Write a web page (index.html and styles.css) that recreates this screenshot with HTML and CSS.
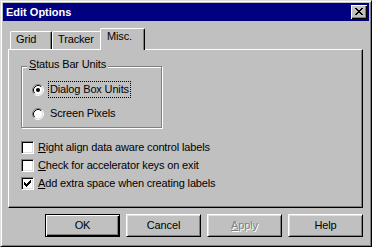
FILE: index.html
```html
<!DOCTYPE html>
<html>
<head>
<meta charset="utf-8">
<link rel="stylesheet" href="styles.css">
</head>
<body>
<div class="window">
  <div class="titlebar">
    <span class="title">Edit Options</span>
    <span class="close">
      <svg width="8" height="7" viewBox="0 0 8 7"><path fill="#000" d="M0 0h2v1H0zM6 0h2v1H6zM1 1h2v1H1zM5 1h2v1H5zM2 2h4v1H2zM3 3h2v1H3zM2 4h4v1H2zM1 5h2v1H1zM5 5h2v1H5zM0 6h2v1H0zM6 6h2v1H6z"/></svg>
    </span>
  </div>
  <div class="tabs">
    <div class="tab tab-grid">Grid</div>
    <div class="tab tab-tracker">Tracker</div>
    <div class="tab tab-misc active">Misc.</div>
  </div>
  <div class="panel">
    <div class="group">
      <span class="legend"><u>S</u>tatus Bar Units</span>
      <div class="radio-row">
        <svg class="radio" width="12" height="12" viewBox="0 0 12 12">
          <circle cx="6" cy="6" r="5" fill="#fff"/>
          <path d="M2.11 9.89A5.5 5.5 0 0 1 9.89 2.11" fill="none" stroke="#808080"/>
          <path d="M9.89 2.11A5.5 5.5 0 0 1 2.11 9.89" fill="none" stroke="#fff"/>
          <path d="M2.82 9.18A4.5 4.5 0 0 1 9.18 2.82" fill="none" stroke="#000"/>
          <path d="M9.18 2.82A4.5 4.5 0 0 1 2.82 9.18" fill="none" stroke="#dfdfdf"/>
          <circle cx="6" cy="6" r="2" fill="#000"/>
        </svg>
        <span class="label focus">Dialog Box Units</span>
      </div>
      <div class="radio-row">
        <svg class="radio" width="12" height="12" viewBox="0 0 12 12">
          <circle cx="6" cy="6" r="5" fill="#fff"/>
          <path d="M2.11 9.89A5.5 5.5 0 0 1 9.89 2.11" fill="none" stroke="#808080"/>
          <path d="M9.89 2.11A5.5 5.5 0 0 1 2.11 9.89" fill="none" stroke="#fff"/>
          <path d="M2.82 9.18A4.5 4.5 0 0 1 9.18 2.82" fill="none" stroke="#000"/>
          <path d="M9.18 2.82A4.5 4.5 0 0 1 2.82 9.18" fill="none" stroke="#dfdfdf"/>
        </svg>
        <span class="label">Screen Pixels</span>
      </div>
    </div>
    <div class="checks">
      <div class="check-row"><span class="box"></span><span class="text"><u>R</u>ight align data aware control labels</span></div>
      <div class="check-row"><span class="box"></span><span class="text"><u>C</u>heck for accelerator keys on exit</span></div>
      <div class="check-row"><span class="box"><svg width="7" height="7" viewBox="0 0 7 7"><path fill="#000" d="M0 2h1v3H0zM1 3h1v3H1zM2 4h1v3H2zM3 3h1v3H3zM4 2h1v3H4zM5 1h1v3H5zM6 0h1v3H6z"/></svg></span><span class="text"><u>A</u>dd extra space when creating labels</span></div>
    </div>
  </div>
  <div class="buttons">
    <div class="btn default">OK</div>
    <div class="btn">Cancel</div>
    <div class="btn disabled"><u>A</u>pply</div>
    <div class="btn">Help</div>
  </div>
</div>
</body>
</html>
```
FILE: styles.css
```css
* { box-sizing: border-box; }
html, body { margin: 0; padding: 0; }
body {
  width: 372px;
  height: 247px;
  background: #c0c0c0;
  font-family: "Liberation Sans", Arial, sans-serif;
  font-size: 11px;
  letter-spacing: -0.15px;
  color: #000;
  overflow: hidden;
}
u { text-decoration: underline; text-underline-offset: 1px; }

.window {
  width: 372px;
  height: 247px;
  background: #c0c0c0;
  border: 1px solid;
  border-color: #dfdfdf #000 #000 #dfdfdf;
  box-shadow: inset 1px 1px #fff, inset -1px -1px #808080;
  padding: 2px;
  display: flex;
  flex-direction: column;
}

.titlebar {
  height: 18px;
  background: #000080;
  display: flex;
  align-items: center;
  justify-content: space-between;
  padding: 0 2px 0 3px;
}
.title {
  color: #fff;
  font-weight: bold;
  font-size: 11px;
  letter-spacing: 0;
  line-height: 13px;
}
.close {
  width: 16px;
  height: 14px;
  background: #c0c0c0;
  box-shadow: inset 1px 1px #fff, inset -1px -1px #000, inset -2px -2px #808080;
  display: flex;
  align-items: center;
  justify-content: center;
  padding: 0 1px 1px 0;
}
.close svg { display: block; }

.tabs {
  display: flex;
  align-items: flex-end;
  height: 21px;
  margin-top: 7px;
  padding-left: 7px;
  position: relative;
  z-index: 1;
}
.tab {
  height: 18px;
  background: #c0c0c0;
  border-top: 1px solid #fff;
  border-left: 1px solid #fff;
  border-right: 1px solid #000;
  border-radius: 2px 2px 0 0;
  box-shadow: inset -1px 0 #808080;
  padding: 1px 0 0 5px;
  line-height: 13px;
}
.tab-grid { width: 42px; }
.tab-tracker { width: 50px; }
.tab-misc.active {
  width: 45px;
  height: 22px;
  margin-left: -2px;
  margin-bottom: -1px;
  padding-left: 6px;
}

.panel {
  width: 355px;
  height: 159px;
  margin-left: 5px;
  border: 1px solid;
  border-color: #fff #000 #000 #fff;
  box-shadow: inset -1px -1px #808080;
  padding: 16px 0 0 12px;
}

.group {
  position: relative;
  width: 141px;
  height: 62px;
  border: 1px solid #808080;
  box-shadow: inset 1px 1px #fff, 1px 1px #fff;
  padding: 14px 0 0 10px;
  display: flex;
  flex-direction: column;
  gap: 7px;
}
.legend {
  position: absolute;
  left: 5px;
  top: -9px;
  padding: 0 2px;
  background: #c0c0c0;
  line-height: 13px;
}
.radio-row {
  display: flex;
  align-items: center;
  height: 17px;
}
.radio { display: block; flex: none; }
.label {
  margin-left: 4px;
  border: 1px dotted transparent;
  padding: 1px;
  line-height: 13px;
}
.label.focus { border-color: #000; }

.checks {
  margin-top: 13px;
  display: flex;
  flex-direction: column;
  gap: 5px;
}
.check-row {
  display: flex;
  align-items: center;
  height: 13px;
}
.box {
  width: 13px;
  height: 13px;
  flex: none;
  background: #fff;
  border: 1px solid;
  border-color: #808080 #fff #fff #808080;
  box-shadow: inset 1px 1px #000, inset -1px -1px #dfdfdf;
  display: flex;
  align-items: center;
  justify-content: center;
}
.box svg { display: block; }
.text {
  margin-left: 4px;
  line-height: 13px;
}

.buttons {
  display: flex;
  justify-content: flex-end;
  gap: 6px;
  width: 360px;
  margin-top: 6px;
}
.btn {
  width: 75px;
  height: 23px;
  display: flex;
  align-items: center;
  justify-content: center;
  line-height: 13px;
  border: 1px solid;
  border-color: #fff #000 #000 #fff;
  box-shadow: inset 1px 1px #dfdfdf, inset -1px -1px #808080;
}
.btn.default {
  border-color: #000;
  box-shadow: inset 1px 1px #fff, inset -1px -1px #000, inset -2px -2px #808080;
}
.btn.disabled {
  color: #808080;
  text-shadow: 1px 1px 0 #fff;
}
```
